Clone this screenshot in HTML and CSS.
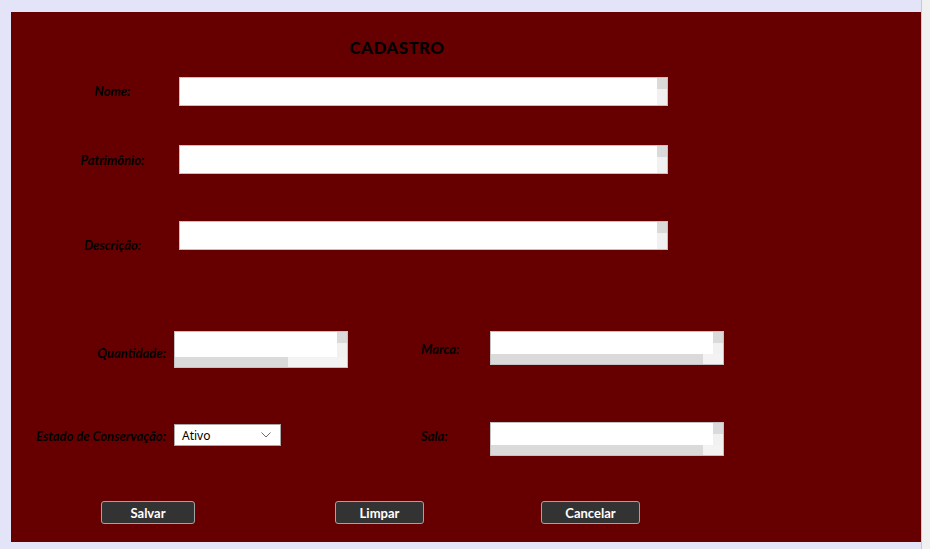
FILE: index.html
```html
<!DOCTYPE html>
<html lang="pt-BR">
<head>
<meta charset="utf-8">
<title>Cadastro</title>
<link rel="stylesheet" href="styles.css">
</head>
<body>
<div class="page">
  <form class="panel">
    <h1 class="title">CADASTRO</h1>

    <div class="row row-1">
      <label class="lbl lbl-top lbl-r1">Nome:</label>
      <div class="ta ta-wide">
        <textarea class="ta-text"></textarea>
        <div class="vbar"><span class="vbtn"></span></div>
      </div>
    </div>

    <div class="row row-2">
      <label class="lbl lbl-top lbl-r2">Patrimônio:</label>
      <div class="ta ta-wide">
        <textarea class="ta-text"></textarea>
        <div class="vbar"><span class="vbtn"></span></div>
      </div>
    </div>

    <div class="row row-3">
      <label class="lbl lbl-top lbl-r3">Descrição:</label>
      <div class="ta ta-wide">
        <textarea class="ta-text"></textarea>
        <div class="vbar"><span class="vbtn"></span></div>
      </div>
    </div>

    <div class="grid">
      <label class="lbl lbl-left lbl-q">Quantidade:</label>
      <div class="cell">
        <div class="tb tb-qtd">
          <textarea class="ta-text"></textarea>
          <div class="vbar"><span class="vbtn"></span></div>
          <div class="hbar"><span class="hthumb hthumb-qtd"></span></div>
          <div class="corner"></div>
        </div>
      </div>
      <label class="lbl lbl-mid lbl-m">Marca:</label>
      <div class="cell">
        <div class="tb tb-side">
          <textarea class="ta-text"></textarea>
          <div class="vbar"><span class="vbtn"></span></div>
          <div class="hbar"><span class="hthumb hthumb-side"></span></div>
          <div class="corner"></div>
        </div>
      </div>

      <label class="lbl lbl-left lbl-e">Estado de Conservação:</label>
      <div class="cell">
        <div class="select">
          <span class="select-val">Ativo</span>
          <svg class="chev" width="10" height="6" viewBox="0 0 10 6"><path d="M0.5 0.5 L5 5 L9.5 0.5" fill="none" stroke="#6b6b6b" stroke-width="1"/></svg>
        </div>
      </div>
      <label class="lbl lbl-mid lbl-s">Sala:</label>
      <div class="cell">
        <div class="tb tb-side">
          <textarea class="ta-text"></textarea>
          <div class="vbar"><span class="vbtn"></span></div>
          <div class="hbar"><span class="hthumb hthumb-side"></span></div>
          <div class="corner"></div>
        </div>
      </div>
    </div>

    <div class="buttons">
      <button type="button" class="btn btn-salvar">Salvar</button>
      <button type="button" class="btn btn-limpar">Limpar</button>
      <button type="button" class="btn btn-cancelar">Cancelar</button>
    </div>
  </form>
  <div class="edge"></div>
</div>
</body>
</html>
```

FILE: styles.css
```css
* { box-sizing: border-box; }

html, body {
  margin: 0;
  padding: 0;
  background: #e4e4f8;
}

.page {
  display: flex;
  width: 930px;
  height: 549px;
}

.panel {
  width: 910px;
  height: 530px;
  margin: 12px 0 7px 11px;
  background: #660000;
  padding-top: 26px;
  display: flex;
  flex-direction: column;
  font-family: Lato, "Open Sans", sans-serif;
}

.edge {
  width: 9px;
  margin-left: auto;
  background: #f0f0f0;
  border-left: 1px solid #c9c9c9;
}

.title {
  margin: 0;
  width: 772px;
  text-align: center;
  font-size: 17px;
  line-height: 20px;
  font-weight: 900;
  color: #000;
  letter-spacing: 0.4px;
}

.lbl {
  font-size: 13px;
  line-height: 16px;
  font-weight: 700;
  font-style: italic;
  color: #000;
}

.row {
  display: flex;
  align-items: flex-start;
  padding-left: 44px;
}
.row-1 { margin-top: 19px; }
.row-2 { margin-top: 39px; }
.row-3 { margin-top: 47px; }

.lbl-top {
  width: 115px;
  margin-right: 9px;
  text-align: center;
}
.lbl-r1 { margin-top: 6px; }
.lbl-r2 { margin-top: 7px; }
.lbl-r3 { margin-top: 16px; }

/* textarea look-alikes */
.ta-text {
  display: block;
  border: 0;
  margin: 0;
  padding: 0;
  resize: none;
  outline: none;
  background: #fff;
  overflow: hidden;
  width: 100%;
  height: 100%;
  min-width: 0;
}

.ta {
  display: flex;
  width: 489px;
  height: 29px;
  border: 1px solid #c2c2c2;
  background: #fff;
}
.ta .ta-text { flex: 1; }

.vbar {
  width: 10px;
  background: #f1f1f1;
  display: flex;
  flex-direction: column;
}
.vbtn {
  display: block;
  height: 11px;
  background: #dadada;
}

.tb {
  display: grid;
  grid-template-columns: 1fr 10px;
  grid-template-rows: 1fr 10px;
  border: 1px solid #c2c2c2;
  background: #fff;
}
.tb-qtd { width: 174px; height: 37px; }
.tb-side { width: 234px; height: 34px; }

.hbar {
  background: #f3f3f3;
  display: flex;
}
.hthumb {
  display: block;
  height: 100%;
  background: #dadada;
}
.hthumb-qtd { width: 113px; }
.hthumb-side { width: 212px; }

.corner { background: #f3f3f3; }

/* lower grid */
.grid {
  display: grid;
  grid-template-columns: 158px 247px 69px 234px;
  grid-template-rows: 37px 34px;
  row-gap: 54px;
  margin-top: 78px;
  margin-left: 5px;
  align-items: start;
}

.lbl-left {
  text-align: right;
  padding-right: 8px;
}
.lbl-q { margin-top: 14px; }
.lbl-m { margin-top: 10px; }
.lbl-e { margin-top: 6px; }
.lbl-s { margin-top: 6px; }

.select {
  margin-top: 2px;
  width: 107px;
  height: 22px;
  border: 1px solid #a8a8a8;
  background: #fff;
  display: flex;
  align-items: center;
  padding: 0 9px 0 7px;
  font-family: "Noto Sans", "Open Sans", sans-serif;
  font-size: 12px;
  color: #000;
}
.select-val { flex: 1; }
.chev { display: block; }

/* buttons */
.buttons {
  display: flex;
  margin-top: 45px;
  padding-left: 90px;
}
.btn {
  height: 23px;
  background: #333333;
  border: 1px solid #a3a3a3;
  border-radius: 3px;
  color: #fff;
  font-family: Lato, "Open Sans", sans-serif;
  font-weight: 700;
  font-size: 13px;
  padding: 0;
}
.btn-salvar { width: 94px; }
.btn-limpar { width: 89px; margin-left: 140px; }
.btn-cancelar { width: 99px; margin-left: 117px; }
```
